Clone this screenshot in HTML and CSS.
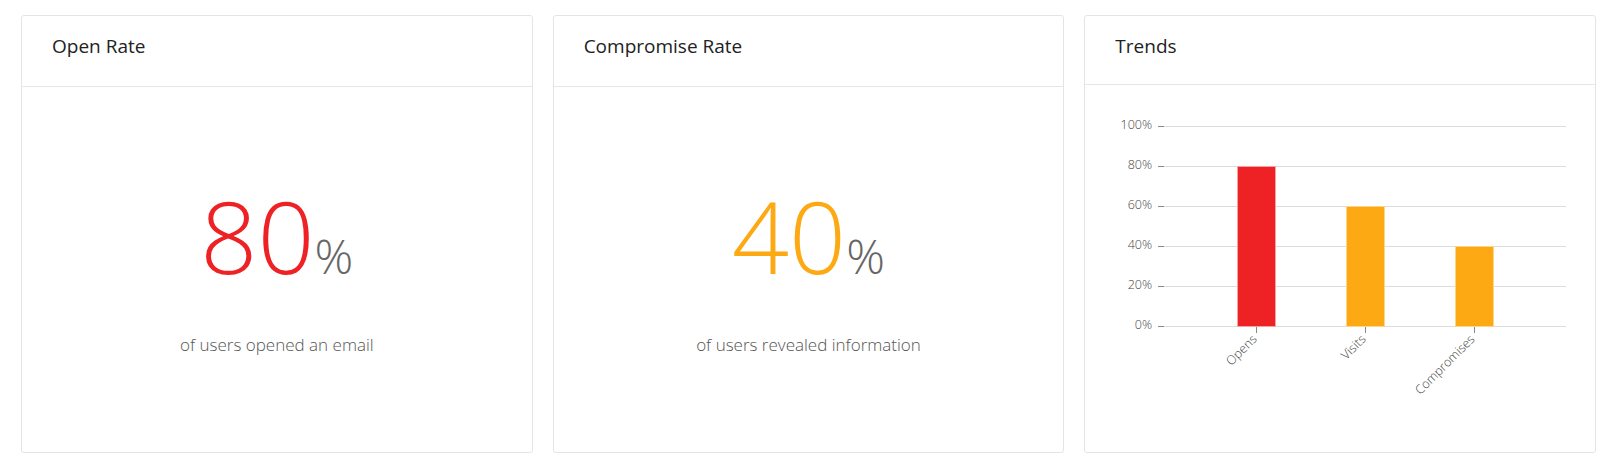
FILE: index.html
```html
<!DOCTYPE html>
<html>

<head>
  <title>Campaign Results</title>
  <link rel="stylesheet" href="styles.css">
</head>

<body>
  <div class="stats-row">
    <!-- Open rate -->
    <div class="card">
      <div class="card-header">
        <h3 class="card-title">Open Rate</h3>
      </div>
      <div class="card-body stat-body">
        <div class="stat-value red">80<span class="stat-unit">%</span></div>
        <div class="stat-label">of users opened an email</div>
      </div>
    </div>

    <!-- Compromise rate -->
    <div class="card">
      <div class="card-header">
        <h3 class="card-title">Compromise Rate</h3>
      </div>
      <div class="card-body stat-body">
        <div class="stat-value orange">40<span class="stat-unit">%</span></div>
        <div class="stat-label">of users revealed information</div>
      </div>
    </div>

    <!-- Trends chart -->
    <div class="card">
      <div class="card-header card-header-short">
        <h3 class="card-title">Trends</h3>
      </div>
      <div class="card-body">
        <svg class="trend-chart" width="509" height="340">
          <g class="grid">
            <line x1="79" y1="41.5" x2="481" y2="41.5" />
            <line x1="79" y1="81.5" x2="481" y2="81.5" />
            <line x1="79" y1="121.5" x2="481" y2="121.5" />
            <line x1="79" y1="161.5" x2="481" y2="161.5" />
            <line x1="79" y1="201.5" x2="481" y2="201.5" />
            <line x1="79" y1="241.5" x2="481" y2="241.5" />
          </g>
          <g class="ticks">
            <line x1="73" y1="41.5" x2="79" y2="41.5" />
            <line x1="73" y1="81.5" x2="79" y2="81.5" />
            <line x1="73" y1="121.5" x2="79" y2="121.5" />
            <line x1="73" y1="161.5" x2="79" y2="161.5" />
            <line x1="73" y1="201.5" x2="79" y2="201.5" />
            <line x1="73" y1="241.5" x2="79" y2="241.5" />
            <line x1="171.5" y1="242" x2="171.5" y2="248" />
            <line x1="280.5" y1="242" x2="280.5" y2="248" />
            <line x1="389.5" y1="242" x2="389.5" y2="248" />
          </g>
          <g class="axis-label y-label">
            <text x="67" y="44">100%</text>
            <text x="67" y="84">80%</text>
            <text x="67" y="124">60%</text>
            <text x="67" y="164">40%</text>
            <text x="67" y="204">20%</text>
            <text x="67" y="244">0%</text>
          </g>
          <rect class="bar bar-red" x="152.5" y="81.5" width="38" height="160" />
          <rect class="bar bar-orange" x="261.5" y="121.5" width="38" height="120" />
          <rect class="bar bar-orange" x="370.5" y="161.5" width="38" height="80" />
          <g class="axis-label x-label">
            <text x="172.5" y="255" transform="rotate(-45 172.5 255)">Opens</text>
            <text x="281.5" y="255" transform="rotate(-45 281.5 255)">Visits</text>
            <text x="390.5" y="255" transform="rotate(-45 390.5 255)">Compromises</text>
          </g>
        </svg>
      </div>
    </div>
  </div>
</body>

</html>
```
FILE: styles.css
```css
html,
body {
  margin: 0;
  padding: 0;
  background: #FFFFFF;
  font-family: "Open Sans", Arial, sans-serif;
}

.stats-row {
  display: grid;
  grid-template-columns: repeat(3, 1fr);
  gap: 20px;
  padding: 15px 21px;
}

.card {
  height: 438px;
  box-sizing: border-box;
  border: 1px solid #E4E4E4;
  border-radius: 3px;
  background: #FFFFFF;
  display: flex;
  flex-direction: column;
}

.card-header {
  height: 71px;
  box-sizing: border-box;
  padding: 17px 30px 0;
  border-bottom: 1px solid #E6E6E6;
}

.card-header-short {
  height: 69px;
}

.card-title {
  margin: 0;
  font-size: 19px;
  line-height: 26px;
  font-weight: 500;
  color: #222222;
}

.card-body {
  flex: 1;
}

.stat-body {
  padding-top: 98px;
  text-align: center;
}

.stat-value {
  font-size: 100px;
  line-height: 1;
  font-weight: 300;
}

.stat-value.red {
  color: #EE2125;
}

.stat-value.orange {
  color: #FDA913;
}

.stat-unit {
  font-size: 48px;
  color: #666666;
}

.stat-label {
  margin-top: 48px;
  font-size: 17px;
  line-height: 24px;
  font-weight: 300;
  color: #555555;
}

.trend-chart {
  display: block;
}

.grid line {
  stroke: #DDDDDD;
  stroke-width: 1;
}

.ticks line {
  stroke: #888888;
  stroke-width: 1;
}

.axis-label text {
  font-family: "Open Sans", Arial, sans-serif;
  font-size: 12.5px;
  font-weight: 300;
  fill: #444444;
  text-anchor: end;
}

.bar {
  stroke-width: 1;
}

.bar-red {
  fill: #EE2125;
  stroke: #F4A3A5;
}

.bar-orange {
  fill: #FDA913;
  stroke: #FDD48A;
}
```
